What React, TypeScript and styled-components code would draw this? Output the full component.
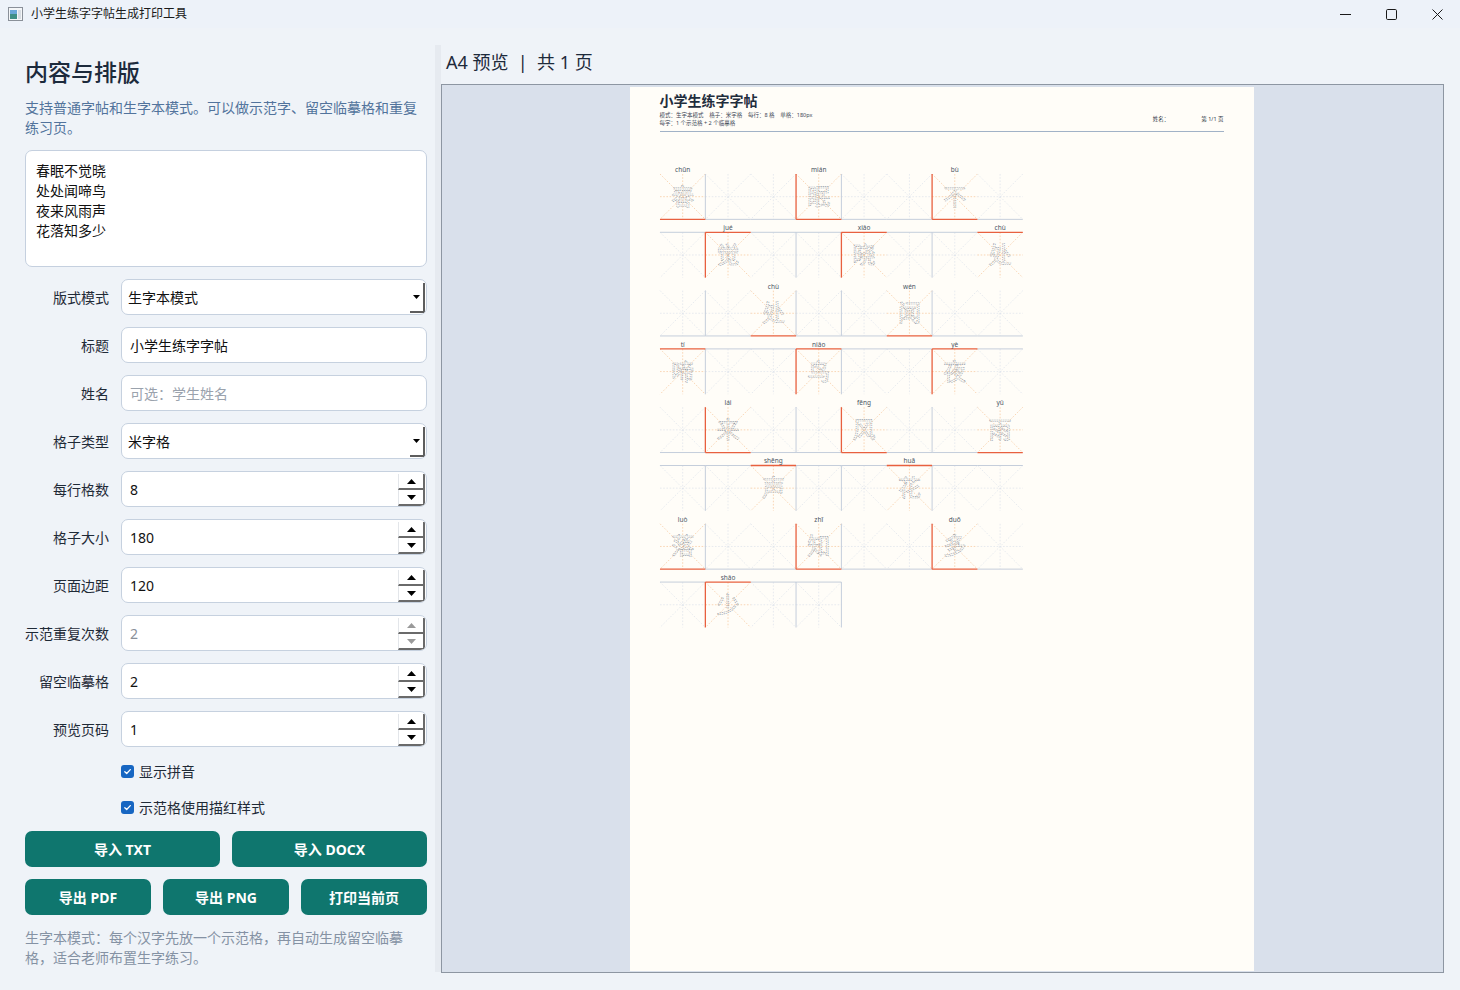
import React from "react";
import styled, { createGlobalStyle } from "styled-components";

const FONT = `"Noto Sans", "Noto Sans CJK SC", sans-serif`;

const GlobalStyle = createGlobalStyle`
  html, body {
    margin: 0;
    padding: 0;
    width: 1460px;
    height: 990px;
    overflow: hidden;
    background: #eff3f8;
    font-family: ${FONT};
  }
  * { box-sizing: border-box; }
`;

const Window = styled.div`
  width: 1460px;
  height: 990px;
  display: flex;
  flex-direction: column;
  background: #eff3f8;
  color: #1f2a37;
`;

const TitleBar = styled.div`
  height: 28px;
  flex: none;
  display: flex;
  align-items: center;
  padding-left: 8px;
  background: #edf2f9;
`;

const TitleText = styled.span`
  margin-left: 8px;
  font-size: 12px;
  color: #1a1a1a;
  line-height: 16px;
`;

const WinControls = styled.div`
  margin-left: auto;
  display: flex;
  height: 28px;
`;

const WinButton = styled.div`
  width: 46px;
  height: 28px;
  display: flex;
  align-items: center;
  justify-content: center;
`;

const Body = styled.div`
  flex: 1;
  display: flex;
  min-height: 0;
`;

const LeftPanel = styled.div`
  width: 435px;
  flex: none;
  padding: 29px 8px 0 25px;
  display: flex;
  flex-direction: column;
  gap: 12px;
`;

const Splitter = styled.div`
  width: 6px;
  flex: none;
  margin: 17px 0 18px;
  background: #e6eaf0;
`;

const Heading = styled.h1`
  margin: 0;
  font-size: 23px;
  line-height: 30px;
  font-weight: 500;
  color: #1c2a3c;
`;

const Description = styled.p`
  margin: -1px 0 0;
  font-size: 14px;
  line-height: 20px;
  color: #52739c;
`;

const TextArea = styled.div`
  height: 117px;
  background: #ffffff;
  border: 1px solid #c5d0df;
  border-radius: 7px;
  padding: 10px 10px;
  font-size: 14px;
  line-height: 20px;
  color: #111;
`;

const FormRow = styled.div`
  display: grid;
  grid-template-columns: 84px 1fr;
  column-gap: 12px;
  align-items: center;
  height: 36px;
`;

const Label = styled.label`
  text-align: right;
  font-size: 14px;
  color: #1f2a37;
  white-space: nowrap;
`;

const FieldBox = styled.div<{ $disabled?: boolean }>`
  height: 36px;
  display: flex;
  align-items: stretch;
  background: #ffffff;
  border: 1px solid #c6d1df;
  border-radius: 7px;
  font-size: 14px;
  color: ${(p) => (p.$disabled ? "#8a9099" : "#111")};
  overflow: hidden;
`;

const FieldText = styled.div<{ $pad?: number }>`
  flex: 1;
  display: flex;
  align-items: center;
  padding-left: ${(p) => p.$pad ?? 8}px;
`;

const TextInput = styled.input`
  height: 36px;
  width: 100%;
  border: 1px solid #c6d1df;
  border-radius: 7px;
  background: #ffffff;
  padding: 0 8px;
  font-family: ${FONT};
  font-size: 14px;
  color: #111;
  outline: none;
  &::placeholder { color: #9aa2ad; }
`;

const DropButton = styled.div`
  width: 15px;
  margin: 3px 1px 1px 0;
  display: flex;
  align-items: center;
  justify-content: center;
  border-right: 2px solid #5d5d5d;
  border-bottom: 2px solid #5d5d5d;
  background: #ffffff;
`;

const SpinColumn = styled.div`
  width: 27px;
  display: flex;
  flex-direction: column;
  margin: 2px 1px 0 0;
`;

const SpinBtn = styled.div`
  flex: 1;
  display: flex;
  align-items: center;
  justify-content: center;
  border-left: 1px solid #e3e6ea;
  border-right: 2px solid #6a6a6a;
  border-bottom: 2px solid #6a6a6a;
  background: #ffffff;
`;

const CheckRow = styled.div`
  height: 24px;
  display: flex;
  align-items: center;
  padding-left: 96px;
  gap: 5px;
  font-size: 14px;
  color: #1f2a37;
`;

const CheckBox = styled.span`
  width: 13px;
  height: 13px;
  border-radius: 3px;
  background: #1766c2;
  display: flex;
  align-items: center;
  justify-content: center;
`;

const ButtonRow = styled.div<{ $cols: number }>`
  display: grid;
  grid-template-columns: repeat(${(p) => p.$cols}, 1fr);
  column-gap: 12px;
`;

const ActionButton = styled.div`
  height: 36px;
  border-radius: 7px;
  background: #0f766e;
  color: #ffffff;
  font-size: 14px;
  font-weight: 700;
  display: flex;
  align-items: center;
  justify-content: center;
`;

const FootNote = styled.p`
  margin: 1px 0 0;
  font-size: 14px;
  line-height: 20px;
  color: #8592a4;
`;

const RightPanel = styled.div`
  flex: 1;
  display: flex;
  flex-direction: column;
  padding: 22px 16px 17px 0;
  gap: 10px;
  min-width: 0;
`;

const PreviewTitle = styled.div`
  font-size: 18px;
  line-height: 24px;
  padding-left: 5px;
  color: #1d2a3b;
  white-space: pre;
`;

const PreviewArea = styled.div`
  flex: 1;
  border: 1px solid #8d96a2;
  background: #d9e0eb;
  overflow: hidden;
`;

const Sheet = styled.div`
  width: 624px;
  height: 884px;
  margin: 2px auto 0;
  background: #fffdf8;
  padding: 5px 30px 0;
  position: relative;
  left: -1px;
`;

const SheetHeader = styled.div`
  display: flex;
  justify-content: space-between;
  align-items: flex-end;
  border-bottom: 1px solid #a1b2c7;
  padding-bottom: 4px;
`;

const SheetTitle = styled.div`
  font-size: 14px;
  line-height: 17px;
  font-weight: 700;
  color: #1f2d3d;
`;

const SheetInfo = styled.div`
  margin-top: 2px;
  font-size: 5.5px;
  line-height: 8px;
  color: #3d4756;
  white-space: pre;
`;

const SheetMeta = styled.div`
  display: flex;
  gap: 32px;
  font-size: 5.5px;
  line-height: 8px;
  color: #2c3644;
  margin-bottom: 4px;
`;

const GridSvg = styled.svg`
  display: block;
  margin-top: 30px;
  overflow: visible;
`;

const chars = "春眠不觉晓处处闻啼鸟夜来风雨声花落知多少".split("");
const pinyin = [
  "chūn", "mián", "bù", "jué", "xiǎo", "chù", "chù", "wén", "tí", "niǎo",
  "yè", "lái", "fēng", "yǔ", "shēng", "huā", "luò", "zhī", "duō", "shǎo",
];
const CELL = 45.35;
const PITCH = 58.3;
const TOP = 12;
const COLS = 8;
const TOTAL = 60;
const VIS = [1, 3, 4, 6];
const GRAY = "#c5cedb";
const RED = "#e8603f";

function PracticeGrid() {
  const rows = Math.ceil(TOTAL / COLS);
  const guides: React.ReactNode[] = [];
  const gray: React.ReactNode[] = [];
  const red: React.ReactNode[] = [];
  const texts: React.ReactNode[] = [];

  for (let r = 0; r < rows; r++) {
    const n = Math.min(COLS, TOTAL - r * COLS);
    const top = TOP + r * PITCH;
    const hy = r % 2 === 0 ? top + CELL : top;
    for (let c = 0; c < n; c++) {
      const i = r * COLS + c;
      const demo = i % 3 === 0;
      const x = c * CELL;
      const gc = demo ? "#f6c59a" : "#dde3eb";
      const k = `${r}-${c}`;
      guides.push(
        <g key={`g${k}`} stroke={gc} strokeWidth={0.7} strokeDasharray="1.6 1.6" fill="none">
          <line x1={x} y1={top} x2={x + CELL} y2={top + CELL} />
          <line x1={x + CELL} y1={top} x2={x} y2={top + CELL} />
          <line x1={x + CELL / 2} y1={top} x2={x + CELL / 2} y2={top + CELL} />
          <line x1={x} y1={top + CELL / 2} x2={x + CELL} y2={top + CELL / 2} />
        </g>
      );
      const seg = <line key={`h${k}`} x1={x} y1={hy} x2={x + CELL} y2={hy} />;
      (demo ? red : gray).push(seg);
      if (demo) {
        const ci = i / 3;
        texts.push(
          <g key={`t${k}`}>
            <text
              x={x + CELL / 2}
              y={top - 2}
              fontSize={6.5}
              textAnchor="middle"
              fill="#4b5563"
              fontFamily={FONT}
            >
              {pinyin[ci]}
            </text>
            <text
              x={x + CELL / 2}
              y={top + CELL / 2 + 8}
              fontSize={23}
              textAnchor="middle"
              fill="none"
              stroke="#8e97a5"
              strokeWidth={0.6}
              strokeDasharray="1.3 0.9"
              fontFamily={`"Noto Sans CJK SC", sans-serif`}
            >
              {chars[ci]}
            </text>
          </g>
        );
      }
    }
    for (const b of VIS) {
      if (b - 1 >= n) continue;
      const isRed = b < n && (r * COLS + b) % 3 === 0;
      const l = <line key={`v${r}-${b}`} x1={b * CELL} y1={top} x2={b * CELL} y2={top + CELL} />;
      (isRed ? red : gray).push(l);
    }
  }

  const h = TOP + (rows - 1) * PITCH + CELL + 2;
  return (
    <GridSvg width={564} height={h} viewBox={`0 0 564 ${h}`}>
      {guides}
      <g stroke={GRAY} strokeWidth={1}>{gray}</g>
      <g stroke={RED} strokeWidth={1.3}>{red}</g>
      {texts}
    </GridSvg>
  );
}

const AppIcon = () => (
  <svg width="15" height="14" viewBox="0 0 15 14">
    <rect x="0.5" y="0.5" width="14" height="13" fill="#f4f6f8" stroke="#8a9099" />
    <rect x="2" y="3" width="7" height="9" fill="#3f8f86" />
    <rect x="2" y="3" width="7" height="4" fill="#6aa7d8" />
    <rect x="10" y="3" width="3" height="9" fill="#d8dde3" />
  </svg>
);

const Arrow = ({ up, color = "#000" }: { up?: boolean; color?: string }) => (
  <svg width="9" height="5" viewBox="0 0 9 5">
    {up ? <polygon points="0,5 9,5 4.5,0" fill={color} /> : <polygon points="0,0 9,0 4.5,5" fill={color} />}
  </svg>
);

const SmallArrow = () => (
  <svg width="7" height="4" viewBox="0 0 7 4">
    <polygon points="0,0 7,0 3.5,4" fill="#000" />
  </svg>
);

const Check = () => (
  <svg width="9" height="9" viewBox="0 0 9 9">
    <path d="M1.8 4.7 L3.7 6.5 L7.3 2.6" stroke="#fff" strokeWidth="1.3" fill="none" strokeLinecap="round" strokeLinejoin="round" />
  </svg>
);

const Combo = ({ value }: { value: string }) => (
  <FieldBox>
    <FieldText $pad={6}>{value}</FieldText>
    <DropButton>
      <SmallArrow />
    </DropButton>
  </FieldBox>
);

const Spin = ({ value, disabled }: { value: string; disabled?: boolean }) => (
  <FieldBox $disabled={disabled}>
    <FieldText>{value}</FieldText>
    <SpinColumn>
      <SpinBtn>
        <Arrow up color={disabled ? "#9a9a9a" : "#000"} />
      </SpinBtn>
      <SpinBtn>
        <Arrow color={disabled ? "#9a9a9a" : "#000"} />
      </SpinBtn>
    </SpinColumn>
  </FieldBox>
);

export default function App() {
  return (
    <>
      <GlobalStyle />
      <Window>
        <TitleBar>
          <AppIcon />
          <TitleText>小学生练字字帖生成打印工具</TitleText>
          <WinControls>
            <WinButton>
              <svg width="11" height="11" viewBox="0 0 11 11">
                <line x1="0" y1="5.5" x2="11" y2="5.5" stroke="#1a1a1a" strokeWidth="1" />
              </svg>
            </WinButton>
            <WinButton>
              <svg width="11" height="11" viewBox="0 0 11 11">
                <rect x="0.5" y="0.5" width="10" height="10" rx="1.2" stroke="#1a1a1a" fill="none" strokeWidth="1" />
              </svg>
            </WinButton>
            <WinButton>
              <svg width="11" height="11" viewBox="0 0 11 11">
                <path d="M0.5 0.5 L10.5 10.5 M10.5 0.5 L0.5 10.5" stroke="#1a1a1a" strokeWidth="1" />
              </svg>
            </WinButton>
          </WinControls>
        </TitleBar>
        <Body>
          <LeftPanel>
            <Heading>内容与排版</Heading>
            <Description>支持普通字帖和生字本模式。可以做示范字、留空临摹格和重复练习页。</Description>
            <TextArea>
              春眠不觉晓
              <br />
              处处闻啼鸟
              <br />
              夜来风雨声
              <br />
              花落知多少
            </TextArea>
            <FormRow>
              <Label>版式模式</Label>
              <Combo value="生字本模式" />
            </FormRow>
            <FormRow>
              <Label>标题</Label>
              <TextInput readOnly value="小学生练字字帖" />
            </FormRow>
            <FormRow>
              <Label>姓名</Label>
              <TextInput readOnly placeholder="可选：学生姓名" />
            </FormRow>
            <FormRow>
              <Label>格子类型</Label>
              <Combo value="米字格" />
            </FormRow>
            <FormRow>
              <Label>每行格数</Label>
              <Spin value="8" />
            </FormRow>
            <FormRow>
              <Label>格子大小</Label>
              <Spin value="180" />
            </FormRow>
            <FormRow>
              <Label>页面边距</Label>
              <Spin value="120" />
            </FormRow>
            <FormRow>
              <Label>示范重复次数</Label>
              <Spin value="2" disabled />
            </FormRow>
            <FormRow>
              <Label>留空临摹格</Label>
              <Spin value="2" />
            </FormRow>
            <FormRow>
              <Label>预览页码</Label>
              <Spin value="1" />
            </FormRow>
            <CheckRow>
              <CheckBox>
                <Check />
              </CheckBox>
              显示拼音
            </CheckRow>
            <CheckRow>
              <CheckBox>
                <Check />
              </CheckBox>
              示范格使用描红样式
            </CheckRow>
            <ButtonRow $cols={2}>
              <ActionButton>导入 TXT</ActionButton>
              <ActionButton>导入 DOCX</ActionButton>
            </ButtonRow>
            <ButtonRow $cols={3}>
              <ActionButton>导出 PDF</ActionButton>
              <ActionButton>导出 PNG</ActionButton>
              <ActionButton>打印当前页</ActionButton>
            </ButtonRow>
            <FootNote>生字本模式：每个汉字先放一个示范格，再自动生成留空临摹格，适合老师布置生字练习。</FootNote>
          </LeftPanel>
          <Splitter />
          <RightPanel>
            <PreviewTitle>{"A4 预览  |  共 1 页"}</PreviewTitle>
            <PreviewArea>
              <Sheet>
                <SheetHeader>
                  <div>
                    <SheetTitle>小学生练字字帖</SheetTitle>
                    <SheetInfo>
                      {"模式：生字本模式    格子：米字格    每行：8 格    单格：180px\n每字：1 个示范格 + 2 个临摹格"}
                    </SheetInfo>
                  </div>
                  <SheetMeta>
                    <span>姓名：</span>
                    <span>第 1/1 页</span>
                  </SheetMeta>
                </SheetHeader>
                <PracticeGrid />
              </Sheet>
            </PreviewArea>
          </RightPanel>
        </Body>
      </Window>
    </>
  );
}
